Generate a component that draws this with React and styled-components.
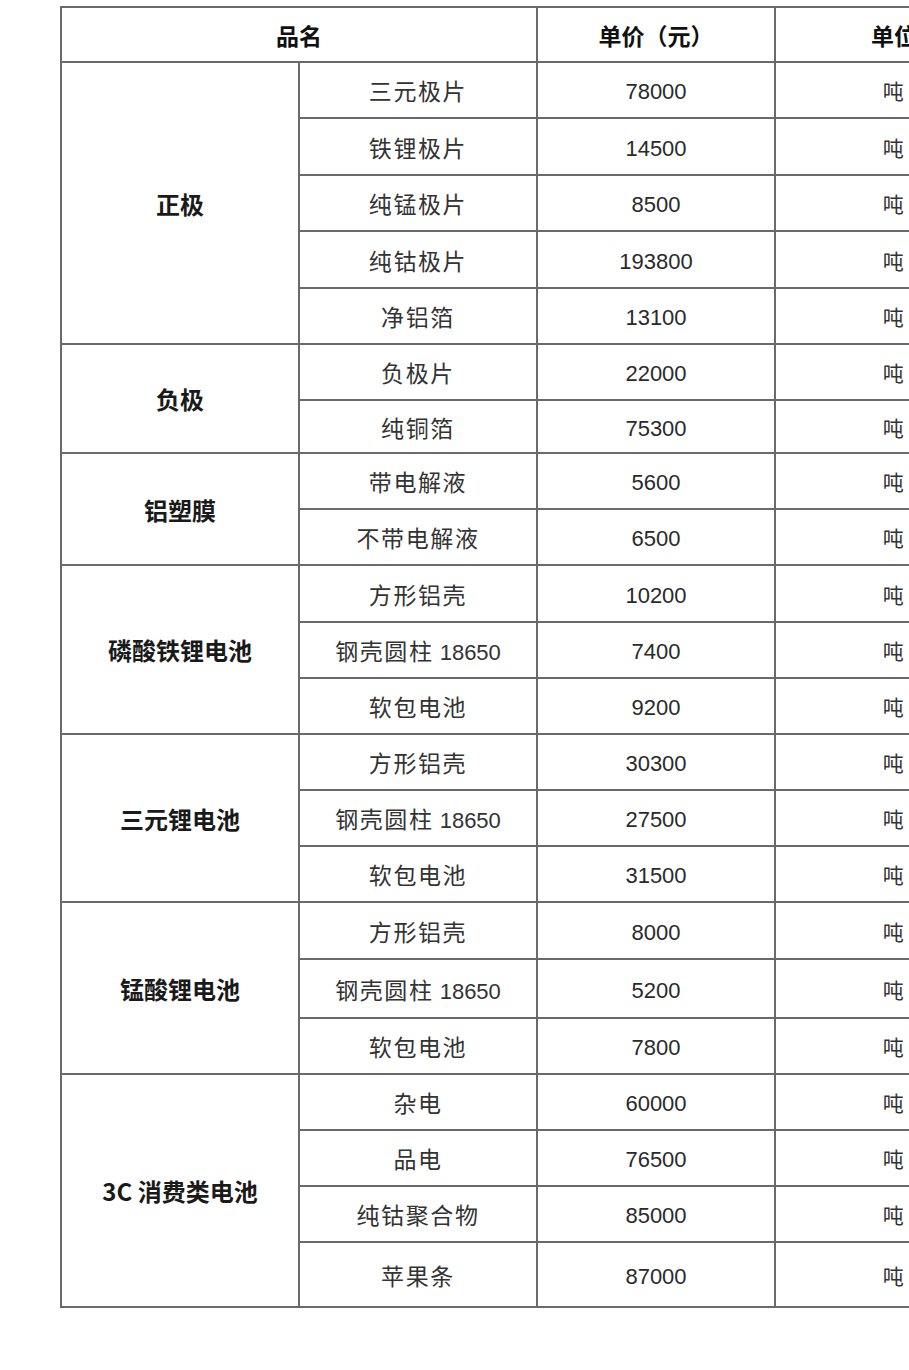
import React from "react";
import styled, { createGlobalStyle } from "styled-components";

const GlobalStyle = createGlobalStyle`
    html, body {
        margin: 0;
        padding: 0;
        background: #fff;
        overflow: hidden;
    }
    body {
        font-family: "Noto Sans CJK SC", "Noto Sans", sans-serif;
    }
`;

const groups = [
    {
        name: "正极",
        items: [
            ["三元极片", "78000", 56],
            ["铁锂极片", "14500", 57],
            ["纯锰极片", "8500", 56],
            ["纯钴极片", "193800", 57],
            ["净铝箔", "13100", 56],
        ],
    },
    {
        name: "负极",
        items: [
            ["负极片", "22000", 56],
            ["纯铜箔", "75300", 53],
        ],
    },
    {
        name: "铝塑膜",
        items: [
            ["带电解液", "5600", 56],
            ["不带电解液", "6500", 56],
        ],
    },
    {
        name: "磷酸铁锂电池",
        items: [
            ["方形铝壳", "10200", 57],
            ["钢壳圆柱 18650", "7400", 56],
            ["软包电池", "9200", 56],
        ],
    },
    {
        name: "三元锂电池",
        items: [
            ["方形铝壳", "30300", 56],
            ["钢壳圆柱 18650", "27500", 56],
            ["软包电池", "31500", 56],
        ],
    },
    {
        name: "锰酸锂电池",
        items: [
            ["方形铝壳", "8000", 57],
            ["钢壳圆柱 18650", "5200", 59],
            ["软包电池", "7800", 56],
        ],
    },
    {
        name: "3C 消费类电池",
        items: [
            ["杂电", "60000", 56],
            ["品电", "76500", 56],
            ["纯钴聚合物", "85000", 56],
            ["苹果条", "87000", 65],
        ],
    },
];

const Page = styled.div`
    width: 909px;
    height: 1370px;
    padding: 6px 0 0 60px;
    box-sizing: border-box;
    overflow: hidden;
`;

const Table = styled.table`
    border-collapse: collapse;
    table-layout: fixed;
    width: 952px;
`;

const Col = styled.col`
    width: 238px;
`;

const Row = styled.tr`
    height: ${(p) => p.$h}px;
`;

const HeadCell = styled.th`
    border: 2px solid #6a6a6a;
    padding: 0;
    text-align: center;
    vertical-align: middle;
    font-size: 23px;
    font-weight: 700;
    color: #111;
    white-space: nowrap;
`;

const GroupCell = styled.td`
    border: 2px solid #6a6a6a;
    padding: 0;
    text-align: center;
    vertical-align: middle;
    font-size: 24px;
    font-weight: 700;
    color: #1a1a1a;
    white-space: nowrap;
`;

const ItemCell = styled.td`
    border: 2px solid #6a6a6a;
    padding: 0;
    text-align: center;
    vertical-align: middle;
    font-size: 23px;
    font-weight: 400;
    letter-spacing: 1.6px;
    color: #333;
    white-space: nowrap;
`;

const Latin = styled.span`
    font-family: "Liberation Sans", Arial, sans-serif;
    letter-spacing: 0;
    font-size: 22px;
`;

const NumCell = styled.td`
    border: 2px solid #6a6a6a;
    padding: 4px 0 0;
    text-align: center;
    vertical-align: middle;
    font-family: "Liberation Sans", Arial, sans-serif;
    font-size: 22px;
    line-height: 1;
    color: #2a2a2a;
`;

const UnitCell = styled(ItemCell)`
    font-size: 21px;
`;

const renderName = (name) => {
    const m = name.match(/^(.*?)(\s[0-9A-Za-z]+)$/);
    if (!m) return name;
    return (
        <>
            {m[1]}
            <Latin>{m[2]}</Latin>
        </>
    );
};

const App = () => {
    return (
        <Page>
            <GlobalStyle />
            <Table>
                <colgroup>
                    <Col />
                    <Col />
                    <Col />
                    <Col />
                </colgroup>
                <thead>
                    <Row $h={55}>
                        <HeadCell colSpan={2}>品名</HeadCell>
                        <HeadCell>单价（元）</HeadCell>
                        <HeadCell>单位</HeadCell>
                    </Row>
                </thead>
                <tbody>
                    {groups.map((g) =>
                        g.items.map(([item, price, h], i) => (
                            <Row key={g.name + i} $h={h}>
                                {i === 0 && (
                                    <GroupCell rowSpan={g.items.length}>
                                        {g.name}
                                    </GroupCell>
                                )}
                                <ItemCell>{renderName(item)}</ItemCell>
                                <NumCell>{price}</NumCell>
                                <UnitCell>吨</UnitCell>
                            </Row>
                        ))
                    )}
                </tbody>
            </Table>
        </Page>
    );
};

export default App;
